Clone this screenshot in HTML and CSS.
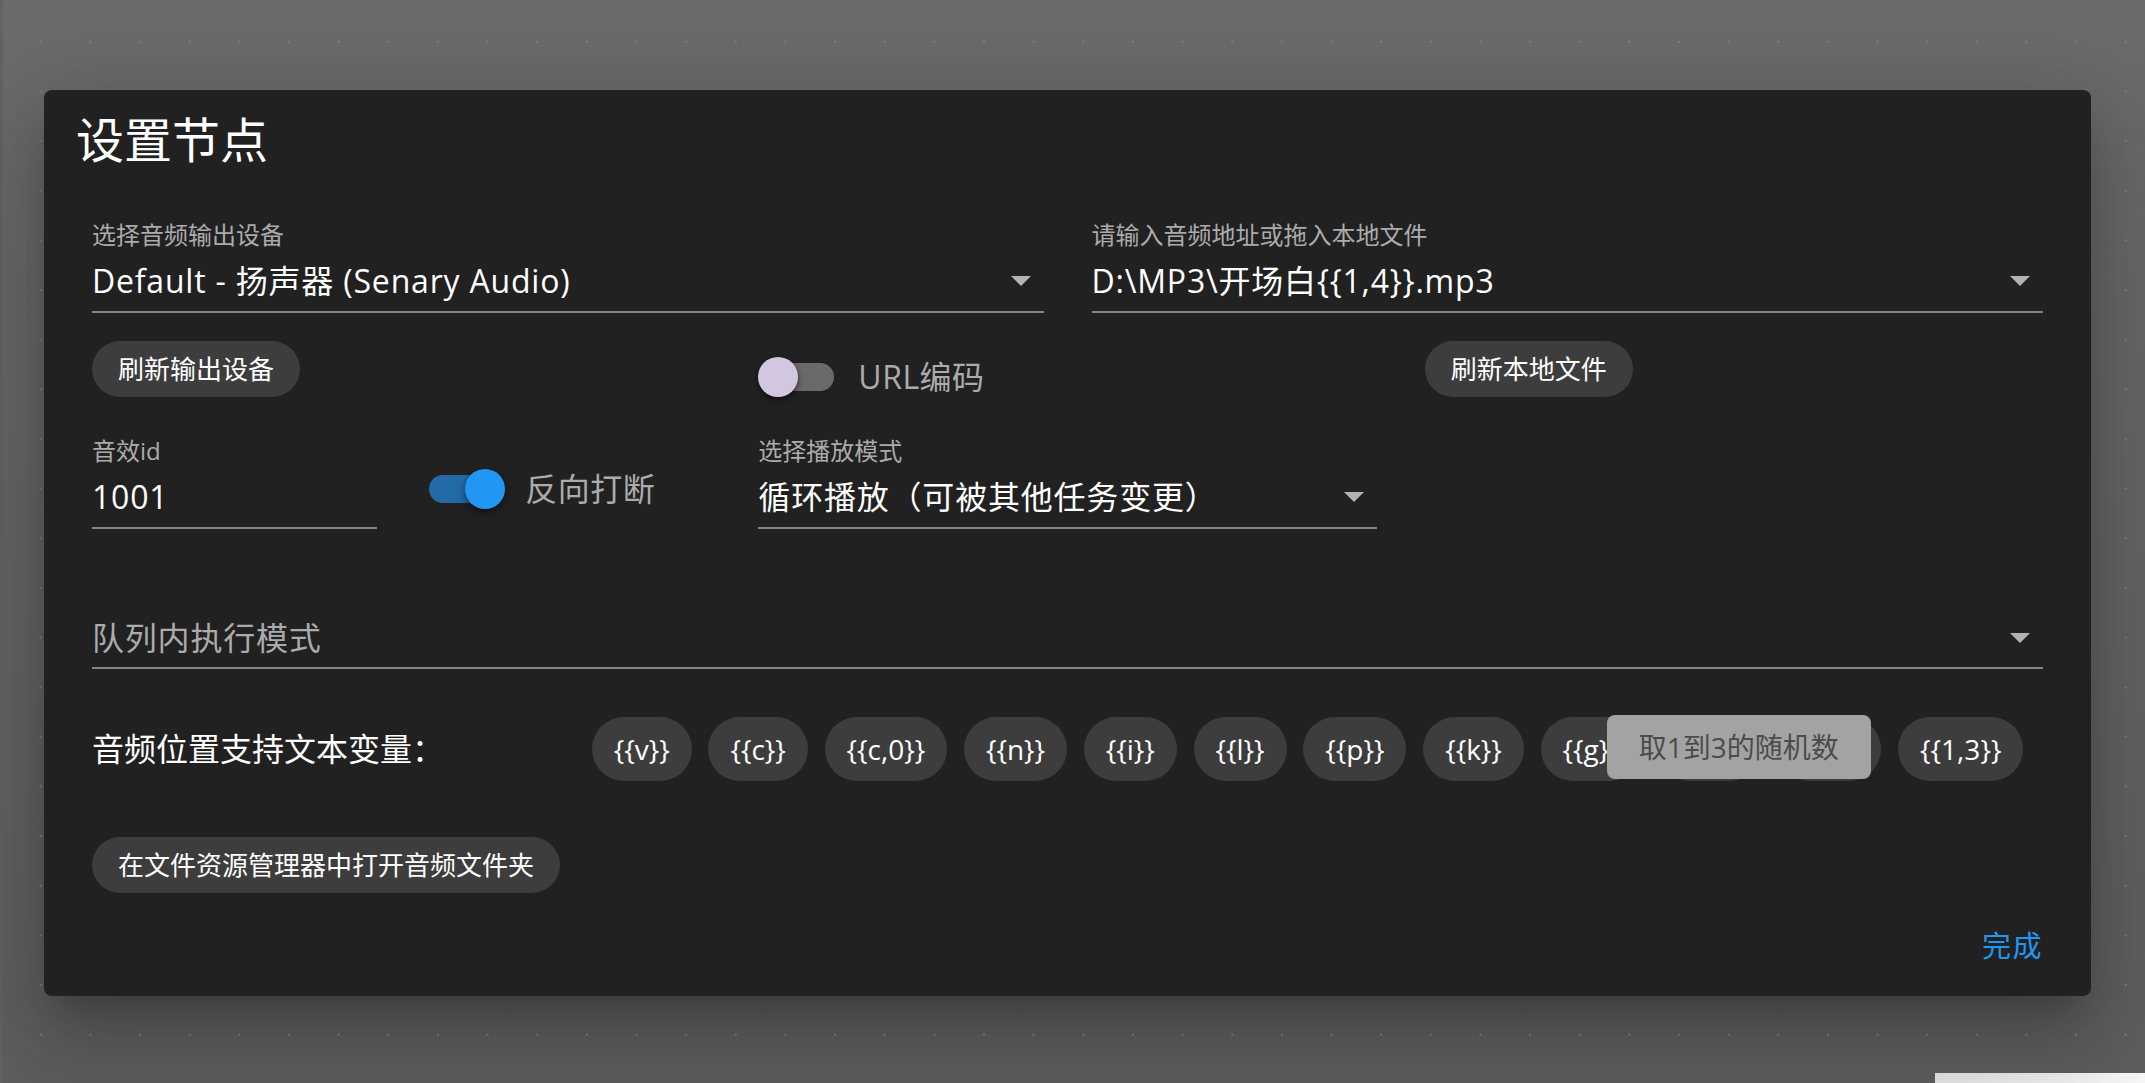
FILE: index.html
```html
<!DOCTYPE html>
<html lang="zh-CN">
<head>
<meta charset="utf-8">
<title>设置节点</title>
<link rel="stylesheet" href="styles.css">
</head>
<body>
<div class="backdrop"></div>
<div class="corner-sheet"></div>
<div class="dialog">
  <h2 class="dialog-title">设置节点</h2>
  <div class="dialog-body">
    <div class="row cols-2 row-1">
      <div class="field">
        <div class="field-label">选择音频输出设备</div>
        <div class="field-control">
          <span class="field-value">Default - 扬声器 (Senary Audio)</span>
          <span class="caret"></span>
        </div>
      </div>
      <div class="field">
        <div class="field-label">请输入音频地址或拖入本地文件</div>
        <div class="field-control">
          <span class="field-value">D:\MP3\开场白{{1,4}}.mp3</span>
          <span class="caret"></span>
        </div>
      </div>
    </div>

    <div class="row cols-3 row-2">
      <div class="cell"><button class="btn">刷新输出设备</button></div>
      <div class="cell switch-cell">
        <div class="switch-wrap">
          <div class="switch"><span class="track"></span><span class="thumb"></span></div>
          <span class="switch-label">URL编码</span>
        </div>
      </div>
      <div class="cell"><button class="btn">刷新本地文件</button></div>
    </div>

    <div class="row cols-3 row-3">
      <div class="cell sub-cols">
        <div class="field">
          <div class="field-label">音效id</div>
          <div class="field-control">
            <span class="field-value">1001</span>
          </div>
        </div>
        <div class="switch-cell">
          <div class="switch-wrap">
            <div class="switch on"><span class="track"></span><span class="thumb"></span></div>
            <span class="switch-label">反向打断</span>
          </div>
        </div>
      </div>
      <div class="field">
        <div class="field-label">选择播放模式</div>
        <div class="field-control">
          <span class="field-value">循环播放（可被其他任务变更）</span>
          <span class="caret"></span>
        </div>
      </div>
      <div class="cell"></div>
    </div>

    <div class="row row-4">
      <div class="field">
        <div class="field-control">
          <span class="field-value placeholder">队列内执行模式</span>
          <span class="caret"></span>
        </div>
      </div>
    </div>

    <div class="row cols-4 row-5">
      <div class="vars-label">音频位置支持文本变量：</div>
      <div class="chips">
        <span class="chip">{{v}}</span>
        <span class="chip">{{c}}</span>
        <span class="chip">{{c,0}}</span>
        <span class="chip">{{n}}</span>
        <span class="chip">{{i}}</span>
        <span class="chip">{{l}}</span>
        <span class="chip">{{p}}</span>
        <span class="chip">{{k}}</span>
        <span class="chip">{{g}}</span>
        <span class="chip">{{h}}</span>
        <span class="chip">{{d}}</span>
        <span class="chip">{{1,3}}</span>
        <div class="tooltip">取1到3的随机数</div>
      </div>
    </div>

    <div class="row row-6">
      <button class="btn">在文件资源管理器中打开音频文件夹</button>
    </div>
  </div>
  <div class="dialog-actions">
    <button class="text-btn">完成</button>
  </div>
</div>
</body>
</html>
```

FILE: styles.css
```css
html, body {
  margin: 0;
  padding: 0;
}
body {
  width: 2145px;
  height: 1083px;
  overflow: hidden;
  font-family: "Open Sans", "Noto Sans CJK SC", sans-serif;
  color: #fff;
}
.backdrop {
  position: fixed;
  inset: 0;
  background-image:
    linear-gradient(to right, #626262 3px, transparent 3px),
    radial-gradient(circle, #b0648e 0.9px, transparent 1.4px),
    linear-gradient(to bottom, #6b6b6b, #5e5e5e);
  background-size: 100% 100%, 49.65px 49.65px, 100% 100%;
  background-position: 0 0, 16px 17px, 0 0;
}
.corner-sheet {
  position: fixed;
  left: 1935px;
  top: 1073px;
  width: 210px;
  height: 10px;
  background: linear-gradient(to right, #e4e4e4, #f6f6f6);
}
.dialog {
  position: fixed;
  left: 44px;
  top: 90px;
  width: 2047px;
  background: #212121;
  border-radius: 8px;
  box-shadow: 0 22px 30px -14px rgba(0,0,0,.2), 0 48px 76px 6px rgba(0,0,0,.14), 0 18px 92px 16px rgba(0,0,0,.12);
}
.dialog-title {
  margin: 0;
  padding: 18px 32px 0;
  font-size: 48px;
  line-height: 64px;
  font-weight: 400;
  color: #fff;
}
.dialog-body {
  padding: 0 48px 0;
}
.row {
  display: grid;
  column-gap: 48px;
}
.cols-2 { grid-template-columns: 1fr 1fr; }
.cols-3 { grid-template-columns: 1fr 1fr 1fr; }
.cols-4 { grid-template-columns: repeat(4, 1fr); }
.row-1 { margin-top: 47px; }
.row-2 { margin-top: 28px; }
.row-3 { margin-top: 38px; }
.row-4 { margin-top: 89px; }
.row-5 { margin-top: 48px; }
.row-6 { margin-top: 56px; display: block; }

.field-label {
  font-size: 24px;
  line-height: 32px;
  color: #ababab;
  white-space: nowrap;
}
.field-control {
  margin-top: 10px;
  display: flex;
  align-items: center;
  padding-bottom: 10px;
  border-bottom: 2px solid #858585;
}
.row-4 .field-control {
  margin-top: 0;
  padding-bottom: 9px;
}
.field-value {
  flex: 1;
  font-size: 32px;
  line-height: 40px;
  letter-spacing: 0.8px;
  color: #fff;
  white-space: nowrap;
}
.field-value.placeholder {
  color: #ababab;
}
.caret {
  width: 0;
  height: 0;
  border-left: 10px solid transparent;
  border-right: 10px solid transparent;
  border-top: 10px solid #b3b3b3;
  margin-right: 13px;
}

.btn {
  height: 56px;
  padding: 0 26px;
  border: none;
  border-radius: 28px;
  background: #3d3d3d;
  color: #fff;
  font-family: inherit;
  font-size: 26px;
  line-height: 56px;
  cursor: pointer;
  white-space: nowrap;
}

.switch-cell { padding-top: 16px; }
.row-3 .switch-cell { padding-top: 34px; }
.switch-wrap {
  display: flex;
  align-items: center;
}
.switch {
  position: relative;
  width: 76px;
  height: 40px;
  flex: none;
}
.switch .track {
  position: absolute;
  left: 4px;
  top: 6px;
  width: 72px;
  height: 28px;
  border-radius: 14px;
  background: #6a6a6a;
}
.switch .thumb {
  position: absolute;
  left: 0;
  top: 0;
  width: 40px;
  height: 40px;
  border-radius: 50%;
  background: #d3c6df;
  box-shadow: 0 4px 8px rgba(0,0,0,.35), 0 2px 4px rgba(0,0,0,.25);
}
.switch.on .track { background: #236aa6; }
.switch.on .thumb { left: 40px; background: #2196f3; }
.switch-label {
  margin-left: 24px;
  font-size: 32px;
  line-height: 40px;
  letter-spacing: 0.5px;
  color: #ababab;
  white-space: nowrap;
}

.sub-cols {
  display: grid;
  grid-template-columns: 1fr 1fr;
  column-gap: 48px;
}

.row-5 { align-items: center; }
.vars-label {
  font-size: 32px;
  line-height: 40px;
  color: #fff;
  white-space: nowrap;
}
.chips {
  grid-column: span 3;
  position: relative;
  display: flex;
  flex-wrap: nowrap;
  gap: 16.7px;
}
.chip {
  height: 64px;
  padding: 0 22px;
  border-radius: 32px;
  background: #3d3d3d;
  color: #fff;
  font-size: 28px;
  line-height: 64px;
  white-space: nowrap;
}
.tooltip {
  position: absolute;
  left: 1015px;
  top: -2px;
  width: 264px;
  height: 64px;
  box-sizing: border-box;
  border-radius: 8px;
  background: #a3a3a3;
  color: #4c4c4c;
  font-size: 28px;
  line-height: 64px;
  text-align: center;
  white-space: nowrap;
}

.dialog-actions {
  display: flex;
  justify-content: flex-end;
  padding: 15px 16px 16px;
}
.text-btn {
  height: 72px;
  padding: 0 32px;
  border: none;
  background: transparent;
  color: #2196f3;
  font-family: inherit;
  font-size: 29px;
  letter-spacing: 1.5px;
  cursor: pointer;
}
```
